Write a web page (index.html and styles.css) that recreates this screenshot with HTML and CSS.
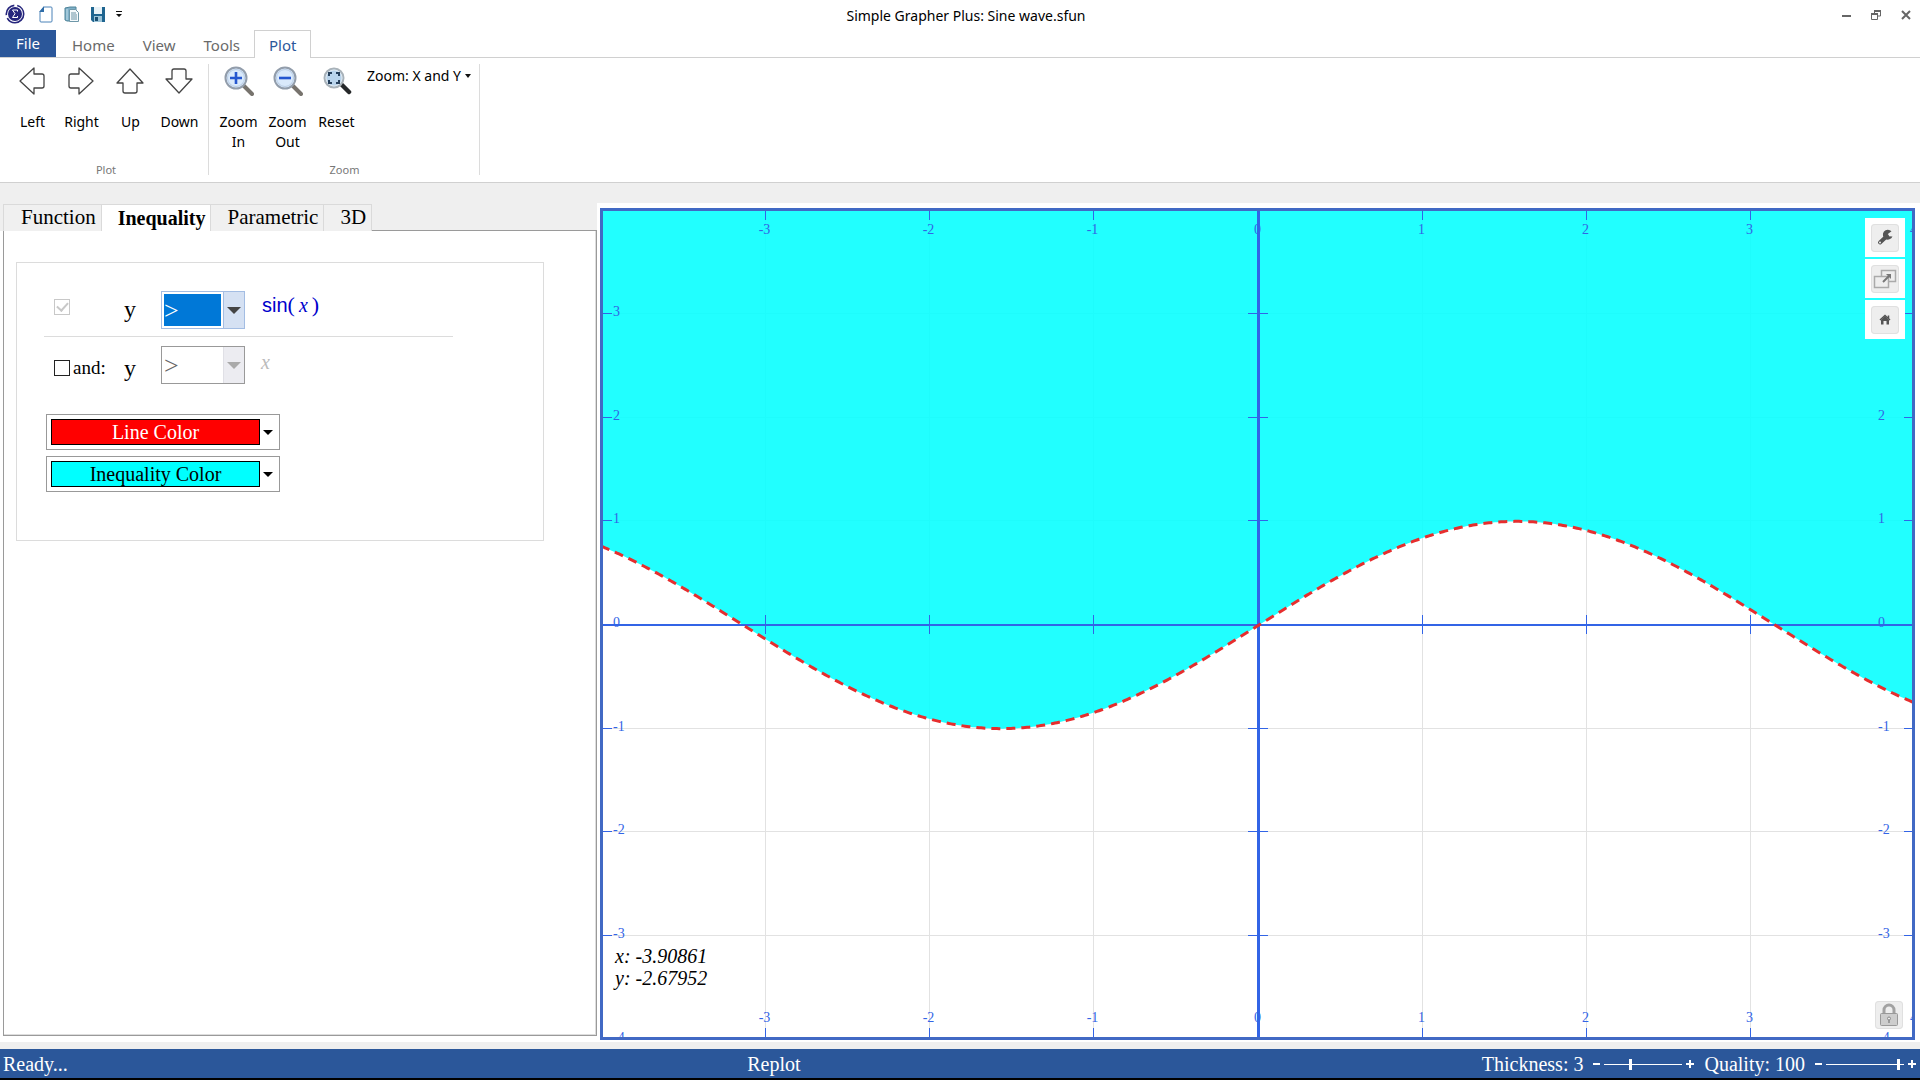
FILE: index.html
```html
<!DOCTYPE html>
<html lang="en">
<head>
<meta charset="utf-8">
<title>Simple Grapher Plus: Sine wave.sfun</title>
<link rel="stylesheet" href="styles.css">
</head>
<body>
<header class="titlebar">
  <div class="quick">
    <svg class="logo" width="20" height="20" viewBox="0 0 20 20" aria-hidden="true"><circle cx="10" cy="10" r="8.7" fill="none" stroke="#25257c" stroke-width="1.6" stroke-dasharray="23 3 14 3"/><circle cx="10" cy="10" r="7" fill="#25257c"/><path d="M12.5 7.500V6H7.500l2.500 3.700-2.500 3.800h5V12" fill="none" stroke="#fff"/></svg>
    <button class="quick-btn" aria-label="New"><svg width="14" height="17" viewBox="0 0 14 17"><path d="M5 1h7q1 0 1 1v13q0 1-1 1H2q-1 0-1-1V6z" fill="#fff" stroke="#4a82b8"/><path d="M5 0v6H0z" fill="#2f6da8"/></svg></button>
    <button class="quick-btn" aria-label="Open"><svg width="16" height="17" viewBox="0 0 16 17"><path d="M1 2l5-1h6v14H3l-2-1z" fill="#7fb0c8" stroke="#4d8298"/><path d="M5.500 3.500h6l3 3v9h-9z" fill="#f5fafc" stroke="#6e97a8"/><path d="M7 7h5M7 9h6M7 11h6M7 13h6" stroke="#6a93a5"/><path d="M3 3v11" stroke="#c6e0eb"/></svg></button>
    <button class="quick-btn" aria-label="Save"><svg width="14" height="15" viewBox="0 0 14 15"><path d="M0 0h14v15H2l-2-2z" fill="#1f6590"/><path d="M3 0h8v7H3z" fill="#e8f2f7"/><path d="M3 9h8v6H3z" fill="#9cc4d8"/><path d="M4 10h3v4H4z" fill="#1a4f72"/></svg></button>
    <button class="quick-btn" aria-label="Customize"><svg width="6" height="6" viewBox="0 0 6 6"><path d="M0 0h6v1H0zM0 3h6L3 6z" fill="#111"/></svg></button>
  </div>
  <h1 class="title">Simple Grapher Plus: Sine wave.sfun</h1>
  <div class="window-controls">
    <button aria-label="Minimize"><svg width="10" height="10" viewBox="0 0 10 10"><path d="M1 5h9v2H1z" fill="#666"/></svg></button>
    <button aria-label="Restore"><svg width="10" height="10" viewBox="0 0 10 10"><path d="M3.500 4V1h6v5H7M.5 4h6v5.500h-6z" fill="none" stroke="#666"/><path d="M3 1h7M0 4h7" stroke="#666" stroke-width="2"/></svg></button>
    <button aria-label="Close"><svg width="10" height="10" viewBox="0 0 10 10"><path d="M1 1l8 8M9 1L1 9" stroke="#666" stroke-width="2"/></svg></button>
  </div>
</header>
<nav class="ribbon-tabs">
  <button class="file">File</button>
  <button class="rtab">Home</button>
  <button class="rtab">View</button>
  <button class="rtab">Tools</button>
  <button class="rtab active">Plot</button>
</nav>
<section class="ribbon">
  <div class="group group-plot">
    <div class="tools">
      <button class="tool"><svg width="30" height="30" viewBox="0 0 30 30"><path d="M2 15L16 2v6h8q2 0 2 2v10q0 2-2 2h-8v6z" class="arrow"/></svg>Left</button>
      <button class="tool"><svg width="30" height="30" viewBox="0 0 30 30"><path d="M26 15L12 2v6H4q-2 0-2 2v10q0 2 2 2h8v6z" class="arrow"/></svg>Right</button>
      <button class="tool"><svg width="30" height="30" viewBox="0 0 30 30"><path d="M14 3L1 17h6v8q0 2 2 2h10q2 0 2-2v-8h6z" class="arrow"/></svg>Up</button>
      <button class="tool"><svg width="30" height="30" viewBox="0 0 30 30"><path d="M14 27L1 13h6V5q0-2 2-2h10q2 0 2 2v8h6z" class="arrow"/></svg>Down</button>
    </div>
    <div class="caption">Plot</div>
  </div>
  <div class="group group-zoom">
    <div class="tools">
      <button class="tool"><svg width="30" height="30" viewBox="0 0 30 30"><path d="M20 20l8 8" stroke="#77736d" stroke-width="4" stroke-linecap="round"/><circle cx="12" cy="12" r="10.500" fill="#d9e9fb" stroke="#929dab" stroke-width="2"/><circle cx="12" cy="12" r="8.500" fill="none" stroke="#b9cde4"/><path d="M12 6v12M6 12h12" stroke="#2456cf" stroke-width="2.600"/></svg>Zoom<br>In</button>
      <button class="tool"><svg width="30" height="30" viewBox="0 0 30 30"><path d="M20 20l8 8" stroke="#77736d" stroke-width="4" stroke-linecap="round"/><circle cx="12" cy="12" r="10.500" fill="#d9e9fb" stroke="#929dab" stroke-width="2"/><circle cx="12" cy="12" r="8.500" fill="none" stroke="#b9cde4"/><path d="M6 12h12" stroke="#2456cf" stroke-width="2.600"/></svg>Zoom<br>Out</button>
      <button class="tool"><svg width="30" height="30" viewBox="0 0 30 30"><path d="M19 18l8 8" stroke="#26282a" stroke-width="4.500" stroke-linecap="round"/><circle cx="12" cy="12" r="9.500" fill="#b9d4ec" stroke="#a9b2b9" stroke-width="2"/><circle cx="12" cy="12" r="8" fill="none" stroke="#dfe8ef"/><path d="M7 10V7h3M14 7h3v3M17 14v3h-3M10 17H7v-3" fill="none" stroke="#26405c" stroke-width="2"/></svg>Reset</button>
      <button class="dropdown">Zoom: X and Y<svg width="6" height="4" viewBox="0 0 6 4"><path d="M0 0h6L3 4z" fill="#111"/></svg></button>
    </div>
    <div class="caption">Zoom</div>
  </div>
</section>
<main class="workspace">
  <aside class="side">
    <div class="tabs" role="tablist">
      <button class="tab" role="tab">Function</button>
      <button class="tab selected" role="tab" aria-selected="true">Inequality</button>
      <button class="tab" role="tab">Parametric</button>
      <button class="tab" role="tab">3D</button>
    </div>
    <div class="panel">
      <div class="box">
        <div class="row first">
          <input type="checkbox" class="check" aria-label="Main inequality" checked disabled>
          <span class="and"></span>
          <label class="var" for="op1">y</label>
          <div class="combo focused"><select id="op1"><option>&gt;</option><option>&lt;</option></select><span class="drop"></span></div>
          <span class="formula"><span class="fn">sin</span><span class="paren">(</span><i>x</i><span class="paren">)</span></span>
        </div>
        <div class="row second">
          <input type="checkbox" class="check" id="and">
          <label class="and" for="and">and:</label>
          <label class="var" for="op2">y</label>
          <div class="combo"><select id="op2" disabled><option>&gt;</option></select><span class="drop"></span></div>
          <span class="formula muted"><i>x</i></span>
        </div>
        <div class="colors">
          <button class="color"><span class="swatch line">Line Color</span><span class="caret"></span></button>
          <button class="color"><span class="swatch fill">Inequality Color</span><span class="caret"></span></button>
        </div>
      </div>
    </div>
  </aside>
  <section class="plot-pane">
    <div class="plot">
      <svg id="graph" role="img" aria-label="Graph of y greater than sin(x)"></svg>
      <div class="plot-tools">
        <button aria-label="Settings"><svg width="28" height="28" viewBox="0 0 28 28"><path d="M9 18.500L16 12" stroke="#555" stroke-width="4" stroke-linecap="round"/><path d="M20.500 7.200a5 5 0 1 0 1 5.300l-3.800-.2-1.200-2z" fill="#555"/><circle cx="9" cy="18.500" r="1" fill="#eee"/></svg></button>
        <button aria-label="Pop out"><svg width="28" height="28" viewBox="0 0 28 28"><path d="M10.500 11V5.500h14v11H18" fill="none" stroke="#aaa" stroke-width="1.500"/><path d="M3.500 11.500h14v11h-14z" fill="none" stroke="#aaa" stroke-width="1.500"/><path d="M12 17l6-6" stroke="#777" stroke-width="2"/><path d="M15 9h5v5z" fill="#777"/></svg></button>
        <button aria-label="Home view"><svg width="28" height="28" viewBox="0 0 28 28"><path d="M10 14l4-4 4 4v4.500h-2.500V15h-3v3.500H10z" fill="#555"/><path d="M9 14l5-4.500 5 4.500M17.500 9.500v3" fill="none" stroke="#555" stroke-width="1.500"/></svg></button>
      </div>
      <button class="lock" aria-label="Lock"><svg width="28" height="28" viewBox="0 0 28 28"><path d="M9 13V9a5 5 0 0 1 10 0v4" fill="none" stroke="#a2a2a2" stroke-width="3"/><rect x="5.500" y="12.500" width="17" height="12" rx="1" fill="#cdcdcd" stroke="#999"/><circle cx="14" cy="17.500" r="1.500" fill="#eee" stroke="#888"/><path d="M14 19v3" stroke="#888" stroke-width="1.500"/></svg></button>
      <div class="coords">x: -3.90861<br>y: -2.67952</div>
    </div>
  </section>
</main>
<footer class="status">
  <span class="ready">Ready...</span>
  <button class="replot">Replot</button>
  <div class="sliders">
    <label for="thick">Thickness: 3</label>
    <div class="slider"><button class="minus" aria-label="Thinner"></button><input id="thick" type="range" min="1" max="7" value="3"><button class="plus" aria-label="Thicker"></button></div>
    <label for="quality">Quality: 100</label>
    <div class="slider"><button class="minus" aria-label="Lower quality"></button><input id="quality" type="range" min="0" max="105" value="100"><button class="plus" aria-label="Higher quality"></button></div>
  </div>
</footer>
<script src="graph.js"></script>
</body>
</html>
```
FILE: styles.css
```css
* { box-sizing: border-box; }
body {
  margin: 0;
  min-height: 100vh;
  display: flex;
  flex-direction: column;
  background: #efefef;
  color: #000;
  font-family: "Noto Sans", sans-serif;
  font-size: 14px;
}
button {
  margin: 0;
  padding: 0;
  border: 0;
  background: none;
  color: inherit;
  font: inherit;
}
svg { display: block; }

.titlebar {
  display: grid;
  grid-template-columns: 1fr auto 1fr;
  height: 30px;
  background: #fff;
}
.quick { display: flex; align-items: center; gap: 11px; padding: 0 0 4px 5px; }
.quick-btn:first-of-type { margin-left: 3px; }
.title { margin: 0; padding-left: 12px; font-size: 14px; font-weight: 400; line-height: 32px; }
.window-controls { display: flex; justify-content: flex-end; gap: 20px; padding: 10px 9px 0 0; align-items: flex-start; }

.ribbon-tabs {
  display: flex;
  height: 28px;
  background: #fff;
  border-bottom: 1px solid #d0d0d0;
  font-size: 15px;
  line-height: 31px;
  color: #6a6a6a;
}
.file { width: 56px; height: 27px; margin-right: 2px; line-height: 27px; background: #2b579a; color: #fff; }
.rtab { padding: 0 14px; height: 28px; }
.rtab.active { background: #fff; border: 1px solid #d0d0d0; border-bottom: 0; color: #2b579a; line-height: 29px; }

.ribbon {
  display: flex;
  height: 125px;
  padding: 6px 0 7px 8px;
  background: #fff;
  border-bottom: 1px solid #d0d0d0;
}
.group { display: flex; flex-direction: column; justify-content: space-between; border-right: 1px solid #dcdcdc; }
.group-plot { width: 201px; }
.group-zoom { width: 271px; padding-left: 5px; }
.tools { display: flex; align-items: flex-start; }
.tool { width: 49px; line-height: 20px; padding-top: 2px; }
.tool svg { margin: 0 auto 16px; }
.arrow { fill: #fff; stroke: #444; stroke-width: 1.3; stroke-linejoin: round; }
.dropdown { display: flex; align-items: center; gap: 4px; margin-left: 6px; line-height: 24px; white-space: nowrap; }
.caption { padding-right: 4px; font-size: 11px; line-height: 10px; text-align: center; color: #777; }

.workspace { flex: 1; display: flex; padding: 20px 0 7px; }
.side {
  width: 597px;
  display: flex;
  flex-direction: column;
  padding: 1px 0 6px 3px;
  background: linear-gradient(#efefef 28px, #fff 28px);
  font-family: "Liberation Serif", serif;
}
.tabs { display: flex; height: 27px; font-size: 21px; line-height: 24px; background: linear-gradient(#9a9a9a, #9a9a9a) right bottom / 226px 1px no-repeat; }
.tab { height: 27px; padding: 0 5px 2px 16px; border: 1px solid #dadada; border-bottom: 0; border-left: 0; background: #f0f0f0; white-space: nowrap; }
.tab:first-child { padding-left: 17px; border-left: 1px solid #dadada; }
.tab.selected { background: #fff; font-size: 20px; font-weight: 700; padding-bottom: 0; }
.panel { flex: 1; padding: 31px 52px 0 12px; background: #fff; border: 1px solid #9a9a9a; border-top: 0; box-shadow: inset -1px -1px #ddd; }
.box { height: 279px; border: 1px solid #dcdcdc; padding: 24px 90px 0 27px; }
.row { display: flex; height: 50px; padding-left: 10px; }
.row.first { border-bottom: 1px solid #dcdcdc; }
.row.second { padding-top: 5px; }
.check { appearance: none; position: relative; flex: none; width: 16px; height: 16px; margin: 12px 0 0; border: 1px solid #222; background: #fff; }
.second .check { margin-top: 18px; }
.check:disabled { border-color: #c8c8c8; }
.check:disabled::after { content: ""; position: absolute; left: 4px; top: 0; width: 5px; height: 9px; border: solid #c8c8c8; border-width: 0 2px 2px 0; transform: rotate(42deg); }
.and { width: 50px; padding-left: 3px; font-size: 19px; line-height: 52px; }
.var { width: 41px; padding-left: 4px; font-size: 24px; line-height: 44px; }
.second .var { line-height: 52px; }
.combo { display: flex; width: 84px; height: 38px; margin-top: 4px; background: #fff; border: 1px solid #999; }
.combo select { appearance: none; flex: 1; margin: 2px; padding: 0; border: 0; outline: 0; border-radius: 0; background: #fff; color: #666; opacity: 1; font: 26px "Liberation Serif", serif; }
.combo.focused { border-color: #a3bde3; }
.combo.focused select { background: #0078d7; color: #fff; }
.drop { display: grid; place-items: center; width: 21px; background: #ececf1; border-left: 1px solid #e0e0e6; }
.drop::after { content: ""; border: solid transparent; border-width: 7px 7px 0; border-top-color: #aaa; }
.focused .drop { background: #d5e1f3; border-color: #a3bde3; }
.focused .drop::after { border-top-color: #444; }
.formula { display: flex; align-items: center; height: 36px; padding-left: 17px; color: #00c; font-size: 20px; line-height: 24px; }
.formula .fn { font-family: "Liberation Sans", sans-serif; }
.formula i { padding: 0 4px; }
.formula .paren { font-size: 22px; }
.formula.muted { height: 40px; padding-left: 12px; color: #bbb; }
.colors { display: flex; flex-direction: column; align-items: flex-start; gap: 6px; padding: 27px 0 0 2px; }
.color { display: flex; align-items: center; width: 234px; height: 36px; padding: 4px; gap: 3px; border: 1px solid #999; background: #fff; font-size: 20px; }
.swatch { width: 209px; height: 26px; line-height: 24px; border: 1px solid #000; }
.swatch.line { background: #f00; color: #fff; }
.swatch.fill { background: #0ff; }
.caret { border: solid transparent; border-width: 5px 5px 0; border-top-color: #000; }

.plot-pane { flex: 1; min-width: 0; display: flex; padding: 5px 5px 2px 3px; background: #fff; }
.plot { position: relative; flex: 1; border: 3px solid #4169c4; overflow: hidden; font-family: "Liberation Serif", serif; }
#graph { position: absolute; width: 100%; height: 100%; }
#graph text { font-size: 14px; fill: #3264e6; }
.grid { stroke: #e2e2e2; }
.tick { stroke: #3264e6; stroke-width: 1; }
.axis { stroke: #3264e6; }
.area { fill: #0ff; fill-opacity: .87; }
.curve { fill: none; stroke: #e62e2e; stroke-width: 3; stroke-dasharray: 9 6; }
.plot-tools { position: absolute; top: 7px; right: 7px; display: grid; gap: 2px; }
.plot-tools button { width: 40px; height: 39px; padding: 5px 6px; background: #fff; }
.plot-tools svg, .lock svg { background: #eee; border-radius: 4px; box-shadow: inset 0 0 0 1px #e0e0e0; }
.lock { position: absolute; right: 9px; bottom: 8px; }
.coords { position: absolute; left: 12px; bottom: 48px; font-size: 20px; line-height: 22px; font-style: italic; }

.status {
  display: grid;
  grid-template-columns: 39% auto 1fr;
  align-items: center;
  height: 31px;
  padding: 1px 4px 0 0;
  border-bottom: 2px solid #000;
  background: #2b579a;
  color: #fff;
  font: 20px "Liberation Serif", serif;
}
.ready { padding-left: 3px; }
.sliders { display: flex; justify-content: flex-end; align-items: center; gap: 10px; }
.slider { display: flex; align-items: center; gap: 4px; }
.slider input { appearance: none; width: 78px; height: 11px; margin: 0; background: linear-gradient(#fff, #fff) center / 100% 1px no-repeat; }
.slider input::-webkit-slider-thumb { appearance: none; width: 3px; height: 11px; background: #fff; }
.minus, .plus { width: 8px; height: 8px; background: linear-gradient(#fff, #fff) center / 100% 2px no-repeat; }
.minus { width: 7px; }
.plus { background: linear-gradient(#fff, #fff) center / 100% 2px no-repeat, linear-gradient(#fff, #fff) center / 2px 100% no-repeat; }
```
FILE: graph.js
```js
// Draws y > sin(x) into the plot, scaled to the size of its frame.
const svg = document.getElementById('graph');

function draw() {
  const w = svg.clientWidth, h = svg.clientHeight;
  const ux = w / 7.97, uy = h / 7.97;
  const cx = Math.round(w / 2) + 1, cy = Math.round(h / 2) + 1;
  const X = v => cx + v * ux, Y = v => cy - v * uy;
  const mid = v => Math.round(v) + 0.5;
  const line = (x1, y1, x2, y2, cls, sw) =>
    `<line class="${cls}" x1="${x1}" y1="${y1}" x2="${x2}" y2="${y2}"${sw ? ` stroke-width="${sw}"` : ''}/>`;
  const text = (x, y, s, anchor) => `<text x="${x}" y="${y}" text-anchor="${anchor}">${s}</text>`;
  let grid = '', marks = '', curve = '';

  for (let px = -2; px <= w + 2; px += 2) {
    curve += `${curve ? 'L' : 'M'}${px} ${Y(Math.sin((px - cx) / ux)).toFixed(2)}`;
  }
  for (let i = -4; i <= 4; i++) {
    const x = mid(X(i) - 0.5) - 1, y = mid(Y(i)) - 1;
    if (i && Math.abs(i) < 4) {
      grid += line(x, 0, x, h, 'grid') + line(0, y, w, y, 'grid');
      marks += line(x, cy - 10, x, cy + 9, 'tick') + line(cx - 11, y, cx + 9, y, 'tick');
    }
    if (Math.abs(i) < 4) {
      marks += line(x, 0, x, 9, 'tick') + line(x, h - 9, x, h, 'tick');
      marks += line(0, y, 9, y, 'tick') + line(w - 8, y, w, y, 'tick');
    }
    if (i > -4) {
      marks += text(x - 1, 23, i, 'middle') + text(x - 1, h - 15, i, 'middle');
    }
    if (i < 4) {
      marks += text(10, y + 2, i, 'start') + text(w - 34, y + 2, i, 'start');
    }
  }
  marks += line(0, cy, w, cy, 'axis', 2) + line(cx - 0.5, 0, cx - 0.5, h, 'axis', 3);
  svg.innerHTML = grid + `<path class="area" d="${curve}V0H-2Z"/>` + marks + `<path class="curve" d="${curve}"/>`;
}

draw();
new ResizeObserver(draw).observe(svg);
```
